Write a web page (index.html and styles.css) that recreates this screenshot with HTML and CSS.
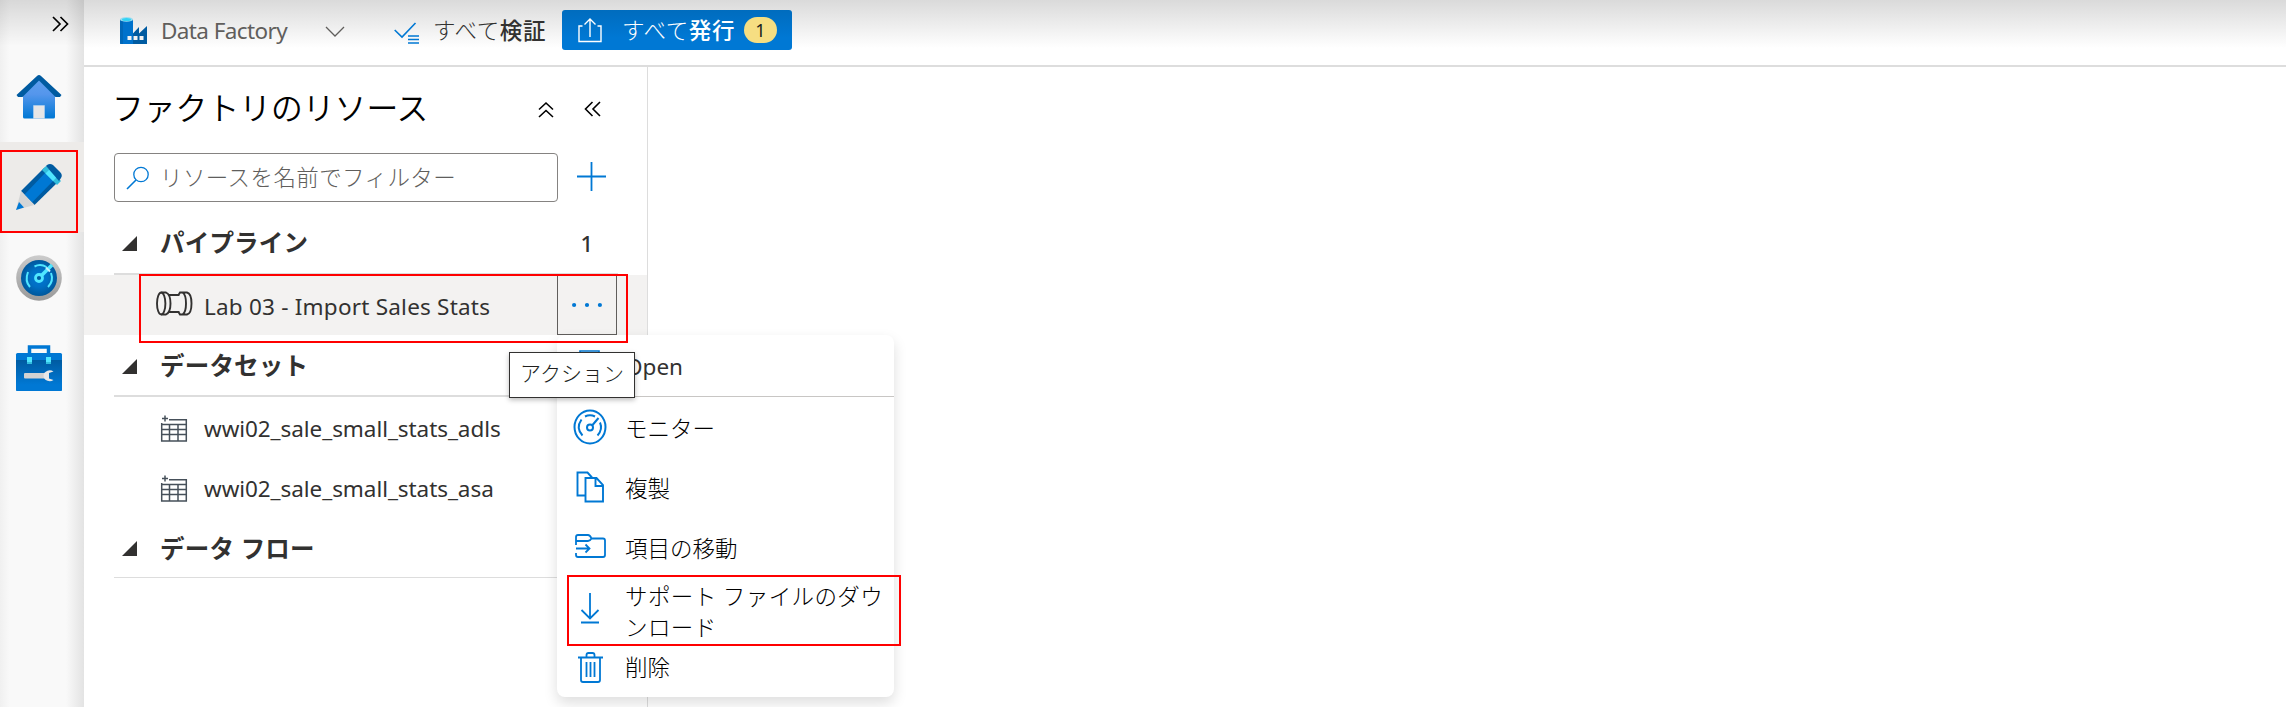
FILE: index.html
```
<!DOCTYPE html>
<html lang="ja">
<head>
<meta charset="utf-8">
<title>Data Factory</title>
<link rel="stylesheet" href="styles.css">
</head>
<body>
<div class="app">
  <nav class="rail">
    <div class="rail-toggle"><svg width="18" height="18" viewBox="0 0 18 18"><path d="M2 2l7 7-7 7M9.500 2l7 7-7 7" fill="none" stroke="#000" stroke-width="1.700"/></svg></div>
    <div class="rail-item"><svg width="46" height="46" viewBox="0 0 46 46">
      <defs><linearGradient id="home" x1="0" y1="0" x2="0" y2="1"><stop offset="0" stop-color="#5ea0ef"/><stop offset=".4" stop-color="#5596ec"/><stop offset="1" stop-color="#0078d4"/></linearGradient></defs>
      <path d="M7 19L23 4l16 15v24a1.500 1.500 0 0 1-1.500 1.500h-29A1.500 1.500 0 0 1 7 43z" fill="url(#home)"/><path d="M.5 21L21 2q2-1.800 4 0l20.500 19-1.500 2h-4.500L23 6.500 6.500 23H2z" fill="#005ba1"/><path d="M17.500 31.500h11v13h-11z" fill="#e6e6e6" stroke="#b3d3f2" stroke-width=".6"/></svg></div>
    <div class="rail-item active"><svg width="46" height="46" viewBox="0 0 46 46">
      <path d="M5 27L28.500 3.500l14 14L18.500 41z" fill="#005ba1"/><path d="M8.500 30.500L31 7l8 8-23 23.500z" fill="#0078d4"/>
      <path d="M5 27l13.500 14L0 46z" fill="#d5d5d5"/><path d="M3 38l5 5.500L0 46z" fill="#0078d4"/><path d="M26 6l4-4 15 15-4 4z" fill="#32bedd"/><path d="M29.500 9.500l4-4L41 13l-4 4z" fill="#50e6ff"/><path d="M30 2l1-1q3-2 6 0l7 7q3 3 1 6l-2 3z" fill="#005ba1"/></svg></div>
    <div class="rail-item"><svg width="46" height="46" viewBox="0 0 46 46">
      <defs><linearGradient id="rim" x1="0" y1="0" x2="0" y2="1"><stop offset="0" stop-color="#ccc"/><stop offset="1" stop-color="#999"/></linearGradient><radialGradient id="dial"><stop offset="0" stop-color="#0078d4"/><stop offset=".5" stop-color="#006fc4"/><stop offset="1" stop-color="#00589c"/></radialGradient></defs>
      <circle cx="23" cy="23" r="22.800" fill="url(#rim)"/><circle cx="23" cy="23" r="18" fill="url(#dial)"/>
      <g fill="none" stroke="#50e6ff" stroke-width="2"><path d="M14 32Q8.500 26 12 17M18.500 11.500q6-3 12 .5M35 18q3 8-3 14"/><path d="M26 20L36 10" stroke-width="3.500"/><path d="M30 12.500l4 4" stroke="#c3f1ff" stroke-width="2"/></g><circle cx="23" cy="23" r="3.500" fill="#005ba1" stroke="#50e6ff" stroke-width="2.800"/></svg></div>
    <div class="rail-item"><svg width="46" height="46" viewBox="0 0 46 46">
      <defs><linearGradient id="box" x1="0" y1="0" x2="0" y2="1"><stop offset="0" stop-color="#005ba1"/><stop offset=".8" stop-color="#0078d4"/></linearGradient></defs>
      <path d="M13.500 9V2h19v7" fill="none" stroke="#0078d4" stroke-width="3.500"/><rect y="8" width="46" height="38" rx="1.500" fill="#0078d4"/><path d="M0 15h46v29.500q0 1.500-1.500 1.500h-43Q0 46 0 44.500z" fill="url(#box)"/><path d="M11 12h5v7h-5zM30 12h5v7h-5z" fill="#50e6ff"/><path d="M11 17h5v2h-5zM30 17h5v2h-5z" fill="#32bedd"/><rect x="8" y="28" width="22" height="5.500" rx="1" fill="#d2d2d2"/><path d="M37.500 26.500q-3-2-6-.8-4 1.500-4 5t4 5q3 1.200 6-.8L33 33.500v-5.500z" fill="#e8e8e8"/></svg></div>
    <div class="mark mark-rail"></div>
  </nav>

  <div class="main">
    <header class="topbar">
      <div class="brand">
        <svg width="27" height="27" viewBox="0 0 27 27"><path d="M12 17.500l7-7.500v6.500L27 9v18H12z" fill="#005ba1"/><path d="M0 2.500h13V27H1q-1 0-1-1z" fill="#0072cc"/><path d="M0 2.500h3V27H1q-1 0-1-1z" fill="#0067b8"/><ellipse cx="6.500" cy="2.400" rx="6.500" ry="2.400" fill="#9cdcf0"/><ellipse cx="6.500" cy="2.600" rx="4.500" ry="1.500" fill="#32d4f5"/><path d="M7.500 19h4v4h-4zM13.500 19h4v4h-4zM19.500 19h4v4h-4z" fill="#f2f2f2"/></svg>
        <span class="t brand-name">Data Factory</span>
        <svg class="brand-chev" width="20" height="12" viewBox="0 0 20 12"><path d="M1 1l9 9 9-9" fill="none" stroke="#605e5c" stroke-width="1.300"/></svg>
      </div>
      <div class="validate">
        <svg width="26" height="23" viewBox="0 0 26 23"><path d="M.7 8L8 15 21.500 1" fill="none" stroke="#0078d4" stroke-width="1.600"/><path d="M14 14h11M14 17.500h11M14 21h11" stroke="#0078d4" stroke-width="1.700"/></svg>
        <span class="t act">すべて<b>検証</b></span>
      </div>
      <button class="publish">
        <svg width="24" height="26" viewBox="0 0 24 26"><path d="M4.500 9H1v15.500h22V9h-3.500M12 20V2M6.500 7.500L12 2l5.500 5.500" fill="none" stroke="#fff" stroke-width="1.400"/></svg>
        <span class="t act">すべて<b>発行</b></span>
        <span class="count">1</span>
      </button>
    </header>

    <div class="workspace">
      <aside class="side">
        <div class="side-head">
          <h1 class="t">ファクトリのリソース</h1>
          <svg class="up" width="16" height="17" viewBox="0 0 16 17"><path d="M1 8.500L8 2l7 6.500M1 16l7-6.500 7 6.500" fill="none" stroke="#000" stroke-width="1.600"/></svg>
          <svg class="fold" width="17" height="16" viewBox="0 0 17 16"><path d="M8.500 1l-7 7 7 7M16 1L9 8l7 7" fill="none" stroke="#000" stroke-width="1.600"/></svg>
        </div>
        <div class="filter">
          <div class="search"><svg width="24" height="24" viewBox="0 0 24 24"><circle cx="15" cy="8.500" r="7.200" fill="none" stroke="#0078d4" stroke-width="1.300"/><path d="M10 14L1 23" stroke="#0078d4" stroke-width="1.600"/></svg><span class="t">リソースを名前でフィルター</span></div>
          <svg class="plus" width="29" height="29" viewBox="0 0 29 29"><path d="M14.500 0v29M0 14.500h29" stroke="#0078d4" stroke-width="1.800"/></svg>
        </div>
        <div class="group g1"><svg width="15" height="15" viewBox="0 0 15 15"><path d="M15 0v15H0z" fill="#323130"/></svg><span class="t">パイプライン</span><span class="num">1</span></div>
        <div class="row selected">
          <svg class="pipe" width="37" height="25" viewBox="0 0 37 25"><g fill="none" stroke="#323130" stroke-width="1.900"><ellipse cx="5.200" cy="12.500" rx="4.200" ry="11"/><path d="M5.200 1.500H10q4.500 2 4.500 11T10 23.500H5.200M13 4h10.500M13 21h10.500M22.500 4l1.500-2.500h7q4.500 1 4.500 11t-4.500 11h-7L22.500 21M26.500 1.500q3.500 2 3.500 11t-3.500 11"/></g></svg>
          <span class="t pipe-name">Lab 03 - Import Sales Stats</span>
          <span class="more"><svg width="32" height="6" viewBox="0 0 32 6"><path fill="#0078d4" d="M1 3a2.100 2.100 0 1 0 4.200 0A2.100 2.100 0 1 0 1 3M13.900 3a2.100 2.100 0 1 0 4.200 0 2.100 2.100 0 1 0-4.200 0M26.800 3A2.100 2.100 0 1 0 31 3a2.100 2.100 0 1 0-4.200 0"/></svg></span>
        </div>
        <div class="group g2"><svg width="15" height="15" viewBox="0 0 15 15"><path d="M15 0v15H0z" fill="#323130"/></svg><span class="t">データセット</span></div>
        <div class="row"><svg class="table" width="26" height="27" viewBox="0 0 26 27"><path d="M.7 8v18h24.600V4.700H8M0 9.500h25M0 14.500h25M0 19.500h25M8.500 9.500V26M17 9.500V26M1 3.500h6M4 .5v6" fill="none" stroke="#46505a" stroke-width="1.500"/></svg><span class="t adls">wwi02_sale_small_stats_adls</span></div>
        <div class="row"><svg class="table" width="26" height="27" viewBox="0 0 26 27"><path d="M.7 8v18h24.600V4.700H8M0 9.500h25M0 14.500h25M0 19.500h25M8.500 9.500V26M17 9.500V26M1 3.500h6M4 .5v6" fill="none" stroke="#46505a" stroke-width="1.500"/></svg><span class="t adls">wwi02_sale_small_stats_asa</span></div>
        <div class="group g3"><svg width="15" height="15" viewBox="0 0 15 15"><path d="M15 0v15H0z" fill="#323130"/></svg><span class="t">データ フロー</span></div>
      </aside>
      <section class="canvas"></section>
    </div>
  </div>

  <div class="menu">
    <div class="item open"><span class="ic"><svg width="26" height="32" viewBox="0 0 26 32"><path d="M3 1h19v30H3z" fill="none" stroke="#0078d4" stroke-width="1.600"/></svg></span><span class="t">Open</span></div>
    <div class="item i-mon"><span class="ic"><svg width="34" height="36" viewBox="0 0 34 36"><g fill="none" stroke="#0078d4" stroke-width="2"><ellipse cx="17" cy="18" rx="15.500" ry="16.500"/><path d="M9.500 26.500Q2.500 19 8.500 10.500M12 7.500q5-2.500 10 0M27 13.500q3 7-2.500 13"/><circle cx="17" cy="18.500" r="3"/><path d="M19.500 16l6-7"/></g></svg></span><span class="t">モニター</span></div>
    <div class="item"><span class="ic"><svg width="28" height="32" viewBox="0 0 28 32"><path d="M9 24.500H1.500v-23h10L16 6.500M9.500 7h11l6.500 7v16.500H9.500zM19.500 7v8H27" fill="none" stroke="#0078d4" stroke-width="1.900"/></svg></span><span class="t">複製</span></div>
    <div class="item i-move"><span class="ic"><svg width="31" height="24" viewBox="0 0 31 24"><path d="M1 11V3q0-2 2-2h10q2 0 3.500 3.500H28q2 0 2 2V21q0 2-2 2H3q-2 0-2-2v-2M1 7h12q2 0 3.500-2.500M1 14.500h13M10.500 10.500l4 4-4 4" fill="none" stroke="#0078d4" stroke-width="1.800"/></svg></span><span class="t">項目の移動</span></div>
    <div class="item i-down"><span class="ic"><svg width="20" height="32" viewBox="0 0 20 32"><path d="M10 1v25M1.500 18l8.500 8.500 8.500-8.500M1 30.500h18" fill="none" stroke="#0078d4" stroke-width="1.800"/></svg></span><span class="t">サポート ファイルのダウ<br>ンロード</span></div>
    <div class="item i-del"><span class="ic"><svg width="25" height="31" viewBox="0 0 25 31"><path d="M0 5.500h25M3 5.500V28q0 2 2 2h15q2 0 2-2V5.500M8.500 5V3q0-2 2-2h4q2 0 2 2v2M8.500 10v15M12.500 10v15M16.500 10v15" fill="none" stroke="#0078d4" stroke-width="1.800"/></svg></span><span class="t">削除</span></div>
  </div>
  <div class="tooltip"><span class="t">アクション</span></div>
  <div class="mark mark-row"></div>
  <div class="mark mark-menu"></div>
</div>
</body>
</html>
```
FILE: styles.css
```
* { box-sizing: border-box; }
body { margin: 0; background: #fff; color: #323130; font: 22.500px "Noto Sans", "Noto Sans CJK JP", sans-serif; }
svg { display: block; flex: none; overflow: visible; }
.t { white-space: nowrap; line-height: 30px; }
.app { position: relative; display: flex; width: 2286px; height: 707px; overflow: hidden; }

.rail { position: relative; width: 84px; flex: none; background: linear-gradient(#0002, #0000 46px), linear-gradient(90deg, #f0f0f0, #f9f9f9 10px, #f9f9f9 66px, #e3e3e3); }
.rail-toggle { height: 52px; padding: 15px 0 0 51px; }
.rail-item { height: 90px; padding: 22px 0 0 16px; }
.rail-item.active { background: #edebe9; }
.rail-item:nth-child(4), .rail-item:nth-child(5) { padding-top: 23px; }

.main { flex: 1; display: flex; flex-direction: column; }
.topbar { height: 67px; display: flex; align-items: flex-start; border-bottom: 2px solid #ddd; background: linear-gradient(#dadada, #fff 48px); }
.brand { display: flex; align-items: flex-start; width: 310px; padding: 17px 0 0 36px; }
.brand-name { width: 163px; margin-left: 14px; margin-top: -1px; color: #605e5c; letter-spacing: -.6px; }
.brand-chev { margin-top: 9px; margin-left: 1px; }
.validate { display: flex; width: 168px; padding-top: 16px; }
.validate svg { margin-top: 6px; }
.validate .act { margin-left: 13px; letter-spacing: .6px; }
.publish { display: flex; align-items: center; width: 230px; height: 40px; margin-top: 10px; padding: 0 15px 0 16px; border: 0; border-radius: 3px; background: linear-gradient(#006cbe, #0078d4 28px); color: #fff; font: inherit; }
.publish .act { margin-left: 20px; letter-spacing: .6px; padding-top: 1px; }
.act { width: 116px; text-align: left; font-weight: 300; }
.act b { font-weight: 500; }
.count { width: 33px; height: 26px; margin-left: 6px; border-radius: 13px; background: #f6de82; color: #201f1e; font-size: 18px; line-height: 26px; }

.workspace { flex: 1; display: flex; }
.side { width: 564px; border-right: 1px solid #ddd; }
.canvas { flex: 1; }
.side-head { display: flex; align-items: center; height: 86px; padding-left: 28px; }
.side-head h1 { width: 426px; margin: -5px 0 0; color: #000; font-size: 31.800px; font-weight: 350; line-height: 44px; }
.side-head .up { margin: -2px 30px 0 0; }
.side-head .fold { margin-top: -2px; }
.filter { display: flex; align-items: center; height: 49px; padding-left: 30px; }
.search { display: flex; align-items: center; width: 444px; height: 49px; margin-right: 19px; padding-left: 11px; border: 1px solid #858381; border-radius: 4px; color: #605e5c; font-weight: 300; }
.search .t { margin-left: 10px; letter-spacing: .4px; }
.plus { margin-top: -2px; }
.group { display: flex; align-items: center; position: relative; margin-left: 30px; width: 504px; padding-left: 8px; border-bottom: 2px solid #ddd; font-size: 24.500px; font-weight: 700; }
.group .t { margin-left: 23px; letter-spacing: .2px; }
.group .num { margin-left: auto; padding-right: 25px; font-size: 22px; font-weight: 500; }
.g1 { height: 73px; padding-top: 11px; }
.g2 { height: 62px; padding-top: 2px; }
.g3 { height: 61px; padding-top: 3px; border-bottom-width: 1px; }
.row { display: flex; align-items: center; height: 60px; padding-left: 77px; }
.row:not(.selected) { padding-top: 2px; }
.row .t { margin-left: 17px; }
.row .adls { letter-spacing: -.06px; padding-top: 1px; }
.selected { padding-left: 72px; background: #f3f2f1; }
.selected .pipe { margin-top: -3px; }
.row .pipe-name { width: 353px; margin-left: 11px; padding-top: 3px; letter-spacing: .22px; }
.more { display: flex; align-items: center; justify-content: center; width: 60px; height: 60px; border: 1px solid #605e5c; }

.menu { position: absolute; left: 557px; top: 335px; width: 337px; height: 362px; border-radius: 8px; background: #fff; box-shadow: 0 6px 14px #0002; }
.item { display: flex; align-items: center; height: 60px; font-weight: 300; color: #000; }
.item .t { padding-top: 3px; }
.ic { display: flex; justify-content: center; width: 68px; padding-right: 2px; }
.item.open { height: 62px; border-bottom: 1px solid #c8c6c4; font-weight: 400; color: #323130; }
.i-move .ic { margin-top: -3px; }
.i-down { height: 64px; }
.i-down .t { line-height: 31px; letter-spacing: .4px; padding-top: 5px; }
.i-down .ic { margin-top: -2px; }
.i-del { height: 52px; }
.i-del .t { padding-top: 2px; }
.tooltip { position: absolute; left: 509px; top: 352px; width: 126px; height: 46px; padding: 5px 10px; border: 1px solid #323130; background: #fff; box-shadow: 0 2px 5px #0004; color: #201f1e; font-size: 21px; font-weight: 300; }
.mark { position: absolute; border: 2px solid #f00; }
.mark-rail { left: 0; top: 150px; width: 78px; height: 83px; }
.mark-row { left: 139px; top: 274px; width: 489px; height: 69px; }
.mark-menu { left: 567px; top: 575px; width: 334px; height: 71px; }
```
